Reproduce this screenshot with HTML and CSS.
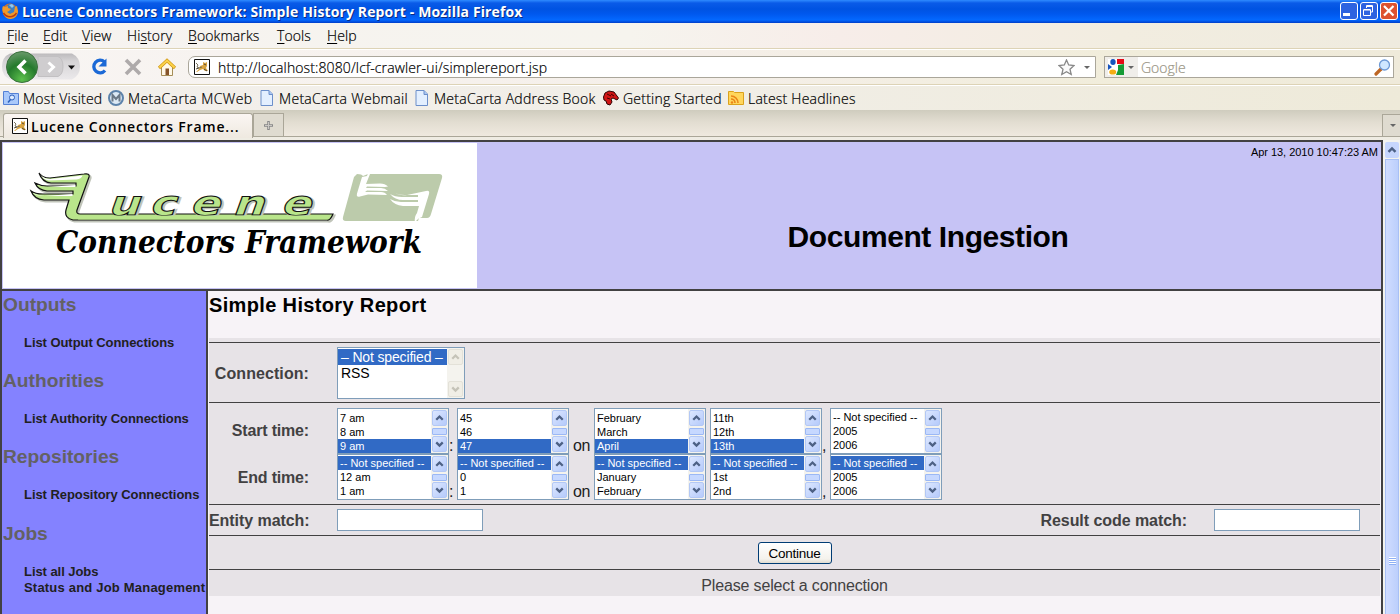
FILE: index.html
```html
<!DOCTYPE html>
<html lang="en">
<head>
<meta charset="utf-8">
<title>Lucene Connectors Framework: Simple History Report</title>
<link rel="stylesheet" href="styles.css">
</head>
<body>
<svg width="0" height="0" class="defs">
  <symbol id="up" viewBox="0 0 16 16"><path d="M4 10.200 8 6.200l4 4" fill="none" stroke="currentColor" stroke-width="2.800"/></symbol>
  <symbol id="down" viewBox="0 0 16 16"><path d="M4 6l4 4 4-4" fill="none" stroke="currentColor" stroke-width="2.800"/></symbol>
  <symbol id="cat" viewBox="0 0 16 16"><path d="M.5.5h15v15H.5z" fill="#fff" stroke="#111"/><path d="M6 7l3-1V3l2 1 2-1v4l-1 2 2 3h-3l-2-2-3 1-3 2H2l3-3z" fill="#d9a441"/><path d="M2 4l2 2-1 2 2 1 3-1" stroke="#77705d" fill="none"/><path d="M2 10l3-1M10 10l3 2M10 5l2 1" stroke="#554b38" fill="none"/></symbol>
  <symbol id="page" viewBox="0 0 16 16"><path d="M2 .5h8l3.500 3.500v11.500H2z" fill="#e3efff" stroke="#6c8fca"/><path d="M10 .5v4h3.500" fill="#a9c6f3" stroke="#6c8fca"/></symbol>
</svg>
<header class="titlebar">
  <svg class="fx" viewBox="0 0 16 16"><circle cx="8" cy="8" r="7.500" fill="#e2711d"/><circle cx="8.500" cy="6" r="5" fill="#3d7fc4"/><path d="M7 2l3-1 2 2-2 2z" fill="#8fc7ef"/><path d="M1 3l2 1 3-1 0 2 3 1-2 2-2 1 3 2 4-2 1-5 2-1 1 5a7 7 0 0 1-15 1C0 7 0 5 1 3z" fill="#f09a2b"/><path d="M1.500 10c3 5 10 5 13 0" stroke="#b93d12" stroke-width="1.500" fill="none"/></svg>
  <h1>Lucene Connectors Framework: Simple History Report - Mozilla Firefox</h1>
  <div class="winbtns">
    <svg viewBox="0 0 18 18"><rect x=".5" y=".5" width="17" height="17" rx="2.500" fill="#2d63e0" stroke="#fff"/><path d="M3 12.500h7" stroke="#fff" stroke-width="3"/></svg>
    <svg viewBox="0 0 18 18"><rect x=".5" y=".5" width="17" height="17" rx="2.500" fill="#2d63e0" stroke="#fff"/><path d="M3.500 8h7v5.500h-7zM3.500 7.500h7M6.500 6V3.500h6v6.500H11M6 4.500h7" stroke="#fff" fill="none"/></svg>
    <svg viewBox="0 0 18 18"><rect x=".5" y=".5" width="17" height="17" rx="2.500" fill="#dd5230" stroke="#fff"/><path d="M4 4l9.500 9.500m0-9.500L4 13.500" stroke="#fff" stroke-width="2.200"/></svg>
  </div>
</header>
<nav class="menubar"><span><u>F</u>ile</span><span><u>E</u>dit</span><span><u>V</u>iew</span><span>Hi<u>s</u>tory</span><span><u>B</u>ookmarks</span><span><u>T</u>ools</span><span><u>H</u>elp</span></nav>
<div class="toolbar">
  <svg class="navbtns" viewBox="0 0 180 34">
    <defs><radialGradient id="g" cx=".5" cy=".9" r=".9"><stop offset="0" stop-color="#5cc04c"/><stop offset=".55" stop-color="#247a2c"/><stop offset="1" stop-color="#6a9a6b"/></radialGradient><linearGradient id="k" x2="0" y2="1"><stop offset="0" stop-color="#bcbabc"/><stop offset=".3" stop-color="#d6d4d6"/><stop offset="1" stop-color="#ebe9eb"/></linearGradient></defs>
    <path d="M10 3.500h62q8 4 8 13t-8 13H10Q2 26 2 16.500T10 3.500z" fill="url(#k)"/>
    <path d="M38 6.500h20q5 2 5 10t-5 10H38z" fill="#cfcdcf" stroke="#c2c0c2"/>
    <circle cx="22" cy="17" r="15.500" fill="url(#g)" stroke="#3b713d"/>
    <path d="M25.500 10.500L19 17l6.500 6.500" fill="none" stroke="#fff" stroke-width="3.500"/>
    <path d="M48.500 12.500L53.500 17l-5 5" fill="none" stroke="#fff" stroke-width="3"/>
    <path d="M68 15.500h7l-3.500 4z" fill="#111"/>
    <path d="M104.500 12A6.300 6.300 0 1 0 105 20.500" fill="none" stroke="#1b69d6" stroke-width="3.300"/><path d="M106.500 8.500v8h-8z" fill="#1b69d6"/>
    <path d="M126 10l14 14m0-14l-14 14" stroke="#aeaaaa" stroke-width="3.600"/>
    <path d="M161.500 17v8.500h11V17l-5.500-5z" fill="#fff8e8" stroke="#a58d57"/><path d="M165.500 18.500h3.500v6.500h-3.500z" fill="#855329"/><path d="M159 18l8-7.500 8 7.500" fill="none" stroke="#d19a19" stroke-width="3.200"/><path d="M159.500 17.500l7.500-7 7.500 7" fill="none" stroke="#fbd149" stroke-width="2"/>
  </svg>
  <div class="url"><svg class="i16"><use href="#cat"/></svg><span>http://localhost:8080/lcf-crawler-ui/simplereport.jsp</span>
    <svg class="star" viewBox="0 0 17 17"><path d="M8.500 1l2.200 5 5.300.5-4 3.700 1.200 5.300-4.700-2.800-4.700 2.800L5 10.200 1 6.500 6.300 6z" fill="#fafafa" stroke="#888" stroke-width="1.300"/></svg><i class="caret"></i></div>
  <div class="search"><div class="engine"><svg class="i16" viewBox="0 0 16 16"><path d="M0 0h16v16H0z" fill="#fff"/><path d="M9 0h7v5h-7z" fill="#e60a16"/><path d="M10 6l6-1v11H8l2-5z" fill="#159b35"/><ellipse cx="5" cy="3" rx="2.700" ry="3" fill="#1654bd"/><path d="M0 5l4 3-4 3z" fill="#1654bd"/><ellipse cx="4.700" cy="13" rx="3.500" ry="2.600" fill="#f4ad13"/></svg><i class="caret"></i></div><span>Google</span>
    <svg class="mag" viewBox="0 0 17 17"><path d="M2 15l5-5" stroke="#bd6624" stroke-width="3.200" stroke-linecap="round"/><circle cx="10.500" cy="6" r="5" fill="#cfe7ff" stroke="#6d99d5" stroke-width="1.300"/></svg></div>
</div>
<div class="bookmarks">
  <svg class="i16" viewBox="0 0 16 16"><path d="M.5 1.500h5l1 2h9v11H.5z" fill="#a9c8fa" stroke="#5480d5"/><circle cx="9" cy="7.500" r="2.500" fill="#dceaff" stroke="#2d60bd"/><path d="M7.500 9.500L5 12.500" stroke="#2d60bd" stroke-width="1.500"/></svg><span class="b1">Most Visited</span>
  <svg class="i16" viewBox="0 0 16 16"><circle cx="8" cy="8" r="7" fill="#dce9f5" stroke="#5d83ab" stroke-width="2"/><path d="M4.500 11.500V5L8 9l3.500-4v6.500" fill="none" stroke="#6a7886" stroke-width="2"/></svg><span class="b2">MetaCarta MCWeb</span>
  <svg class="i16"><use href="#page"/></svg><span class="b3">MetaCarta Webmail</span>
  <svg class="i16"><use href="#page"/></svg><span class="b4">MetaCarta Address Book</span>
  <svg class="i16" viewBox="0 0 16 16"><path d="M.5 7L2 3l4-2 5 1 4.500 6-1.500 2-4-2-2 1 1 3-2 3-3-1-1-3-2-1z" fill="#d01515" stroke="#310505"/><path d="M4 4l4 2M4 8l3 1M8 4l3 2" stroke="#400"/></svg><span class="b5">Getting Started</span>
  <svg class="i16" viewBox="0 0 16 16"><path d="M.5 1.500h5l1 1h9v12H.5z" fill="#ffd65c" stroke="#dba21d"/><path d="M3 6a7 7 0 0 1 7 7M3 9a4 4 0 0 1 4 4" fill="none" stroke="#ea8517" stroke-width="1.600"/><circle cx="4" cy="12.500" r="1.200" fill="#ea8517"/></svg><span class="b6">Latest Headlines</span>
</div>
<div class="tabs"><div class="tab"><svg class="i16"><use href="#cat"/></svg><b>Lucene Connectors Frame...</b></div><div class="newtab"><svg viewBox="0 0 9 9"><path d="M4.500 0v9M0 4.500h9" stroke="#888" stroke-width="2.500"/><path d="M4.500 1v7M1 4.500h7" stroke="#c9c7c3"/></svg></div><div class="alltabs"><i class="caret"></i></div></div>

<div class="viewport">
  <div class="page">
    <div class="banner">
      <svg class="logo" viewBox="3 143 474 145" role="img" aria-label="Lucene Connectors Framework">
        <g class="shadow" transform="translate(1.500 1.500)"><path d="M39 173q3 5 11 5l34-4q6-1 5 3l-12 33q-1 4 3 4h253q-3 7-6 6H73q-9-2-7-10l3-10H44q-10-1-13-9 4 3 12 3h30v-3H47q-9-1-12-8 6 3 12 3h29v-3H51q-9-1-12-10z"/></g>
        <path class="wing" d="M39 173q3 5 11 5l34-4q6-1 5 3l-12 33q-1 4 3 4h253q-3 7-6 6H73q-9-2-7-10l3-10H44q-10-1-13-9 4 3 12 3h30v-3H47q-9-1-12-8 6 3 12 3h29v-3H51q-9-1-12-10z"/>
        <path class="flash" d="M40.500 175q4 4 10 4l32-3.500q-1 3.500-6 4l-28 1q-5-1-8-5.500zM36.500 184q5 3 11 3l28-2v2H50q-9 0-13.500-3zM32.500 193q6 3 12 3l28-2v2H44q-8 0-11.500-3z"/>
        <text class="script glow" transform="translate(111 216) skewX(-6) scale(1.3 1)" x="0 32 63 96 133" y="0">ucene</text>
        <text class="script" transform="translate(109.500 214.500) skewX(-6) scale(1.3 1)" x="0 32 63 96 133" y="0">ucene</text>
        <path class="joint" d="M80 215.500h251q-2 4-4 4H78z"/>
        <path d="M357 174q5 0 6 2l5-2h71q4 0 3 4l-11 36q-1 4-4 4h-8l-1 3h-72q-4 0-3-4l11-40z" fill="#bccbab"/>
        <g fill="#fff"><path d="M362 177l5-1 1-3 2 1-4 10 14-.5q5 0 8 3l-3 .5-18-.5-1 1.500h15q4 0 7 3l-21-.5-2 1.500h16q4 0 6 3l-19-.5-8 2q-4 1-3-3z"/><path d="M394 192q5 4 13 3l19-4q4-1 3 3l-7 23q-4 1-7 5-1-5 2-9l2-7h-16q-9-1-13-7 5 3 11 3h17v-2h-15q-8 0-13-6 5 3 12 3h16v-2h-13q-8 0-11-3z"/></g>
        <text class="sub" x="56" y="252.500" textLength="366" lengthAdjust="spacingAndGlyphs">Connectors Framework</text>
      </svg>
      <div class="headtext"><div class="date">Apr 13, 2010 10:47:23 AM</div><div class="doc">Document Ingestion</div></div>
    </div>
    <div class="body">
      <aside>
        <h3>Outputs</h3><ul><li>List Output Connections</li></ul>
        <h3>Authorities</h3><ul><li>List Authority Connections</li></ul>
        <h3>Repositories</h3><ul><li>List Repository Connections</li></ul>
        <h3 class="jobs">Jobs</h3><ul><li>List all Jobs</li><li class="wide">Status and Job Management</li></ul>
      </aside>
      <main>
        <h2>Simple History Report</h2>
        <div class="form">
          <div class="row conn"><label>Connection:</label><div class="list big"><ul><li class="sel"><span>– Not specified –</span></li><li>RSS</li></ul><div class="sb off"><svg><use href="#up"/></svg><svg><use href="#down"/></svg></div></div></div>
          <div class="row times">
            <div class="trow"><label>Start time:</label>
              <div class="list"><ul><li>7 am</li><li>8 am</li><li class="sel">9 am</li></ul><div class="sb"><svg><use href="#up"/></svg><i></i><svg><use href="#down"/></svg></div></div><span class="s8">:</span>
              <div class="list"><ul><li>45</li><li>46</li><li class="sel">47</li></ul><div class="sb"><svg><use href="#up"/></svg><i></i><svg><use href="#down"/></svg></div></div><span class="s25">on</span>
              <div class="list"><ul><li>February</li><li>March</li><li class="sel">April</li></ul><div class="sb"><svg><use href="#up"/></svg><i></i><svg><use href="#down"/></svg></div></div><span class="s4"></span>
              <div class="list"><ul><li>11th</li><li>12th</li><li class="sel">13th</li></ul><div class="sb"><svg><use href="#up"/></svg><i></i><svg><use href="#down"/></svg></div></div><span class="s8">,</span>
              <div class="list top"><ul><li>-- Not specified --</li><li>2005</li><li>2006</li></ul><div class="sb"><svg><use href="#up"/></svg><i></i><svg><use href="#down"/></svg></div></div>
            </div>
            <div class="trow"><label>End time:</label>
              <div class="list top"><ul><li class="sel">-- Not specified --</li><li>12 am</li><li>1 am</li></ul><div class="sb"><svg><use href="#up"/></svg><i></i><svg><use href="#down"/></svg></div></div><span class="s8">:</span>
              <div class="list top"><ul><li class="sel">-- Not specified --</li><li>0</li><li>1</li></ul><div class="sb"><svg><use href="#up"/></svg><i></i><svg><use href="#down"/></svg></div></div><span class="s25">on</span>
              <div class="list top"><ul><li class="sel">-- Not specified --</li><li>January</li><li>February</li></ul><div class="sb"><svg><use href="#up"/></svg><i></i><svg><use href="#down"/></svg></div></div><span class="s4"></span>
              <div class="list top"><ul><li class="sel">-- Not specified --</li><li>1st</li><li>2nd</li></ul><div class="sb"><svg><use href="#up"/></svg><i></i><svg><use href="#down"/></svg></div></div><span class="s8">,</span>
              <div class="list top"><ul><li class="sel">-- Not specified --</li><li>2005</li><li>2006</li></ul><div class="sb"><svg><use href="#up"/></svg><i></i><svg><use href="#down"/></svg></div></div>
            </div>
          </div>
          <div class="row match"><label>Entity match:</label><input type="text"><label class="right">Result code match:</label><input type="text"></div>
          <div class="row act"><button>Continue</button></div>
          <div class="row msg">Please select a connection</div>
        </div>
      </main>
    </div>
  </div>
  <div class="vscroll"><svg class="i16"><use href="#up"/></svg><div class="thumb"><i></i></div></div>
</div>
</body>
</html>
```

FILE: styles.css
```css
* { box-sizing: border-box; }
body { margin: 0; width: 1400px; height: 614px; overflow: hidden; font-family: "Liberation Sans", Arial, sans-serif; color: #000; background: #efece0; }
ul { list-style: none; margin: 0; padding: 0; }
svg { display: block; flex: none; }
.defs { position: absolute; }
.i16 { width: 16px; height: 16px; }
.caret { border: 3px solid transparent; border-top: 3px solid #666; border-bottom: 0; width: 6px; height: 3px; }

.titlebar { height: 23px; display: flex; align-items: center; padding: 0 2px 1px 2px; background: linear-gradient(#2f8bff 0, #0a5be8 3px, #0053e2 9px, #0058ee 14px, #0368ff 20px, #003dc8 23px); }
.fx { width: 16px; height: 16px; margin-right: 4px; }
.titlebar h1 { margin: 0; flex: 1; color: #fff; font: bold 14px/22px "Open Sans", "Noto Sans", sans-serif; letter-spacing: .13px; text-shadow: 1px 1px 0 #0a2a80; padding-top: 1px; white-space: nowrap; }
.winbtns { display: flex; gap: 2px; }
.winbtns svg { width: 18px; height: 18px; }

.menubar { height: 27px; display: flex; padding-left: 7px; font: 300 14px/25px "Open Sans", "Noto Sans", sans-serif; letter-spacing: .1px; -webkit-text-stroke: .2px #000; background: linear-gradient(90deg, #f6f3f0, #f6f4ee 45%, #f7ede9 60%, #f2ede0 80%, #efebdf); border-bottom: 1px solid #fff; box-shadow: inset 0 -1px #ddd3b6; }
.menubar span:nth-child(1) { width: 36px; }
.menubar span:nth-child(2) { width: 39px; }
.menubar span:nth-child(3) { width: 45px; }
.menubar span:nth-child(4) { width: 61px; }
.menubar span:nth-child(5) { width: 89px; }
.menubar span:nth-child(6) { width: 50px; }
.menubar u { text-underline-offset: 2px; }

.toolbar { height: 36px; display: flex; padding-top: 6px; font: 300 14px/22px "Open Sans", "Noto Sans", sans-serif; background: linear-gradient(90deg, #f8f5f3, #f5efe9 50%, #f1eddb 80%, #efeada); border-bottom: 1px solid #fff; box-shadow: inset 0 -1px #ddd3b6; }
.navbtns { width: 180px; height: 34px; margin: -6px 8px 0 0; }
.url { display: flex; align-items: center; width: 908px; height: 22px; border: 1px solid #aaa69a; border-radius: 7px 0 0 7px; background: #fff; padding: 0 5px; -webkit-text-stroke: .2px #000; }
.url span { margin-left: 8px; flex: 1; letter-spacing: .12px; padding-top: 1px; }
.star { width: 17px; height: 17px; margin-right: 9px; }
.search { display: flex; align-items: center; width: 290px; height: 22px; margin-left: 8px; border: 1px solid #aaa69a; background: #fff; padding-right: 2px; color: #999585; -webkit-text-stroke: .2px #999585; }
.search span { flex: 1; padding-left: 3px; padding-top: 1px; }
.engine { display: flex; align-items: center; gap: 4px; width: 33px; height: 20px; padding-left: 3px; background: #f0eeea; }
.mag { width: 17px; height: 17px; }

.bookmarks { height: 24px; display: flex; align-items: center; padding-left: 3px; font: 300 14px/24px "Open Sans", "Noto Sans", sans-serif; -webkit-text-stroke: .2px #000; background: linear-gradient(90deg, #f3f0ec, #f1eee7 50%, #eeead9); }
.bookmarks span { flex: none; padding: 2px 0 0 4px; white-space: nowrap; letter-spacing: .22px; }
.bookmarks .b1 { width: 89px; }
.bookmarks .b2 { width: 135px; letter-spacing: .4px; }
.bookmarks .b3 { width: 139px; letter-spacing: .3px; }
.bookmarks .b4 { width: 173px; letter-spacing: .25px; }
.bookmarks .b5 { width: 109px; }

.tabs { height: 30px; display: flex; align-items: flex-start; padding: 3px 0 0 3px; background: linear-gradient(#cfccbe 0, #e2ddd1 12px, #efe9df 26px, #aaa698 26px, #aaa698 27px, #efece3 27px); }
.tab { width: 250px; height: 25px; display: flex; align-items: center; padding-left: 8px; border: 1px solid #aaa698; border-bottom: 0; border-radius: 3px 3px 0 0; background: linear-gradient(#fbf6f3, #efe9e0); font: 600 14px/22px "Open Sans", sans-serif; white-space: nowrap; }
.tab b { margin-left: 3px; font-weight: 600; letter-spacing: .8px; padding-top: 2px; }
.newtab { display: flex; align-items: center; justify-content: center; width: 31px; height: 23px; border: 1px solid #aaa698; border-bottom: 0; background: #dfdbd0; }
.newtab svg { width: 9px; height: 9px; }
.alltabs { margin: 1px 0 0 auto; width: 18px; height: 22px; border: 1px solid #aaa698; border-width: 1px 0 0 1px; display: flex; align-items: center; padding-left: 7px; background: #dfdbd0; }

.viewport { display: flex; height: 474px; }
.page { width: 1383px; border: 2px solid #424142; border-bottom: 0; background: #c6c3f5; }
.banner { height: 147px; display: flex; padding: 1px; }
.logo { width: 474px; height: 145px; background: #fff; }
.wing { fill: #b9e58b; stroke: #111; stroke-width: 1.200; }
.flash { fill: #fff; }
.joint { fill: #b9e58b; }
.shadow { fill: #c0c4b9; stroke: #c0c4b9; stroke-width: 2; }
.script { font: italic bold 34px "DejaVu Sans", sans-serif; fill: #b9e58b; stroke: #111; stroke-width: 1; }
.script.glow { fill: #c0c4b9; stroke: #c0c4b9; stroke-width: 2; }
.sub { font: italic bold 31px "DejaVu Serif", serif; }
.headtext { flex: 1; text-align: center; padding: 2px 2px 0 0; }
.date { text-align: right; font-size: 11px; line-height: 14px; letter-spacing: -.03px; }
.doc { font-weight: bold; font-size: 30px; line-height: 36px; letter-spacing: -.42px; padding: 60px 0 0 1px; }

.body { display: flex; height: 325px; border-top: 2px solid #424142; }
aside { width: 206px; background: #8482ff; border-right: 2px solid #424142; padding: 3px 0 0 1px; color: #212021; }
aside h3 { margin: 0; font-size: 19.200px; line-height: 22px; color: #636163; height: 41px; }
aside ul { padding-left: 21px; height: 35px; font-weight: bold; font-size: 13px; line-height: 16px; white-space: nowrap; letter-spacing: -.06px; }
aside .wide { letter-spacing: .2px; }
aside .jobs { padding-top: 1px; height: 42px; }
main { flex: 1; background: #f7f3f7; padding: 0 1px; }
main h2 { margin: 0; height: 47px; font-size: 20px; line-height: 28px; letter-spacing: .35px; }
.form { height: 258px; background: #e7e3e7; padding-top: 4px; color: #424142; }
.row { border-top: 1px solid #424142; }
.row label { width: 100px; text-align: right; font-weight: bold; font-size: 16px; white-space: nowrap; }
.conn { height: 60px; display: flex; padding-top: 4px; }
.conn label { line-height: 53px; letter-spacing: .08px; }
.row label + .list, .match label + input { margin-left: 28px; }
.list { display: flex; width: 112px; height: 46px; border: 1px solid #7f9db9; background: #fff; color: #000; font-size: 11px; line-height: 14px; overflow: hidden; }
.list ul { flex: 1; padding-top: 2px; white-space: nowrap; }
.list.top ul { padding-top: 1px; }
.list li { padding-left: 2px; height: 14px; overflow: hidden; }
.list .sel { background: #316ac5; color: #fff; }
.list.big { width: 128px; height: 52px; font-size: 14px; line-height: 16px; }
.list.big ul { padding-top: 1px; }
.list.big li { height: 16px; padding-left: 3px; letter-spacing: -.15px; }
.sb { width: 17px; display: flex; flex-direction: column; justify-content: space-between; align-items: center; background: #f4f3ee; color: #4d6185; padding: 1px 0; }
.sb svg { width: 15px; height: 16px; border: 1px solid #b3c8f5; border-radius: 2px; background: linear-gradient(135deg, #dce7ff, #b5cafb); }
.sb i { width: 15px; height: 7px; border: 1px solid #9bb8f5; border-radius: 1px; background: #c6d8ff; }
.sb.off { color: #c5c3b8; }
.sb.off svg { border-color: #e3e1d8; background: #f0eee6; }
.times { height: 102px; padding-top: 5px; }
.trow { display: flex; height: 46px; font-size: 16px; color: #212021; }
.trow label { color: #424142; line-height: 45px; letter-spacing: -.18px; }
.trow + .trow label { line-height: 47px; }
.trow > span { line-height: 16px; align-self: flex-end; }
.s8 { width: 8px; }
.s25 { width: 25px; text-align: center; letter-spacing: -.4px; }
.s4 { width: 4px; }
.match { height: 31px; display: flex; align-items: center; }
.match label { padding-top: 1px; letter-spacing: -.06px; }
.match input { width: 146px; height: 22px; border: 1px solid #7f9db9; background: #fff; padding: 0; margin: 0; }
.match label.right { width: 147px; margin-left: auto; }
.match label.right + input { margin: 0 20px 0 27px; }
.act { height: 34px; padding-top: 6px; }
.act button { display: block; margin: 0 auto; width: 74px; height: 22px; border: 1px solid #003c74; border-radius: 3px; padding: 1px 0 0; background: linear-gradient(#fff, #f4f2ec 80%, #e0dccf); font: 13.500px/19px "Liberation Sans", sans-serif; letter-spacing: -.25px; color: #000; }
.msg { text-align: center; font-size: 16px; line-height: 31px; letter-spacing: -.15px; }

.vscroll { width: 17px; padding: 2px 1px 0 2px; background: #f3f3ee; }
.vscroll .i16 { width: 14px; color: #4d6185; background: #c6d6fd; border-radius: 2px; }
.thumb { width: 14px; height: 457px; margin-top: 1px; border: 1px solid #a8c0f5; background: linear-gradient(90deg, #d0dcff, #bccffc); padding: 397px 0 0 3px; }
.thumb i { display: block; width: 7px; height: 8px; background: repeating-linear-gradient(#fff 0 1px, #8fb0f5 1px 2px); }
```
